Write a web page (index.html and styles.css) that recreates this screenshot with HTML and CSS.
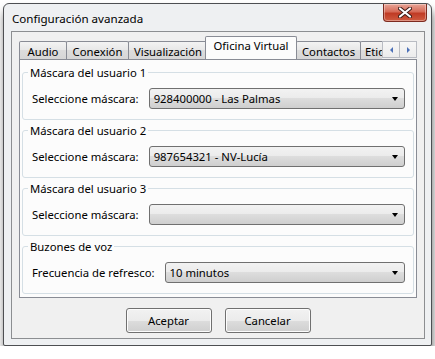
FILE: index.html
```html
<!DOCTYPE html>
<html lang="es">
<head>
<meta charset="UTF-8" />
<title>Configuración avanzada</title>
<link rel="stylesheet" href="styles.css">
</head>
<body>
<div class="window">
  <div class="titlebar">
    <span class="title">Configuración avanzada</span>
    <button class="close" aria-label="Cerrar">
      <svg width="14" height="11" viewBox="0 0 14 11"><path d="M2 1.5 L12 9.5 M12 1.5 L2 9.5" stroke="#3b1a15" stroke-width="4" stroke-linecap="round"/><path d="M2 1.5 L12 9.5 M12 1.5 L2 9.5" stroke="#fff" stroke-width="2.2" stroke-linecap="round"/></svg>
    </button>
  </div>
  <div class="client">
    <div class="tabs">
      <div class="tab-strip">
        <span class="tab w-audio">Audio</span>
        <span class="tab w-conexion">Conexión</span>
        <span class="tab w-visual">Visualización</span>
        <span class="tab active w-oficina">Oficina Virtual</span>
        <span class="tab w-contactos">Contactos</span>
        <span class="tab w-etiq">Etiquetas</span>
      </div>
      <div class="scroller">
        <span class="arrow left"></span>
        <span class="arrow right"></span>
      </div>
    </div>
    <div class="panel">
      <fieldset class="group">
        <legend>Máscara del usuario 1</legend>
        <div class="row">
          <label class="lbl">Seleccione máscara:</label>
          <div class="combo">928400000 - Las Palmas<span class="caret"></span></div>
        </div>
      </fieldset>
      <fieldset class="group">
        <legend>Máscara del usuario 2</legend>
        <div class="row">
          <label class="lbl">Seleccione máscara:</label>
          <div class="combo">987654321 - NV-Lucía<span class="caret"></span></div>
        </div>
      </fieldset>
      <fieldset class="group">
        <legend>Máscara del usuario 3</legend>
        <div class="row">
          <label class="lbl">Seleccione máscara:</label>
          <div class="combo"><span class="caret"></span></div>
        </div>
      </fieldset>
      <fieldset class="group">
        <legend>Buzones de voz</legend>
        <div class="row">
          <label class="lbl">Frecuencia de refresco:</label>
          <div class="combo">10 minutos<span class="caret"></span></div>
        </div>
      </fieldset>
    </div>
    <div class="buttons">
      <button class="btn">Aceptar</button>
      <button class="btn">Cancelar</button>
    </div>
  </div>
</div>
</body>
</html>
```

FILE: styles.css
```css
:root {
  --ui:"Noto Sans","Segoe UI","DejaVu Sans",sans-serif;
  --frame:#eef0f2;
  --face:#f0f0f0;
  --line:#898c95;
  --group:#d5dfe5;
}

body { margin:0; background:#fff; font:11.3px/15px var(--ui); color:#000; }

.window { margin:3px 0 0 3px; width:427px; height:341px; border:1px solid #4d4f52; border-radius:6px 6px 2px 2px; background:var(--frame); box-shadow:1px 7px 9px rgba(0,0,0,.55); display:flex; flex-direction:column; }

.titlebar { height:27px; display:flex; align-items:flex-start; justify-content:space-between; padding:0 4px 0 8px; }
.title { margin-top:7px; font-size:11.6px; }
.close { width:44px; height:18px; margin:0; padding:0; border:1px solid #7c2a1f; border-top:none; border-radius:0 0 4px 4px; background:linear-gradient(#e8a597,#d66b58 45%,#c03b25 55%,#cf5b40); display:flex; align-items:center; justify-content:center; box-shadow:inset 0 0 0 1px rgba(255,255,255,.35); }

.client { flex:1; margin:0 6px 6px 7px; border:1px solid #8c8e91; background:var(--face); padding:8px 7px 0 7px; display:flex; flex-direction:column; }

.tabs { display:flex; align-items:flex-end; height:19px; position:relative; z-index:1; }
.tab-strip { display:flex; align-items:flex-end; overflow:hidden; width:365px; height:23px; }
.tab { flex:none; height:17px; border:1px solid var(--line); border-bottom:none; margin-right:-1px; background:linear-gradient(#f3f3f3,#e7e7e7 50%,#dcdcdc 50%,#d6d6d6); text-align:center; line-height:19px; border-radius:2px 2px 0 0; }
.tab.active { height:22px; background:#fcfcfc; line-height:17px; margin:0 0 -1px -2px; padding-bottom:1px; position:relative; z-index:2; }
.tab.active + .tab { margin-left:-1px; }
.w-audio { width:46px; }
.w-conexion { width:61px; }
.w-visual { width:78px; }
.w-oficina { width:90px; }
.w-contactos { width:63px; }
.w-etiq { width:62px; text-align:left; padding-left:4px; }

.scroller { display:flex; margin:0 0 2px 0; height:16px; }
.arrow { width:16px; height:15px; border:1px solid #b9bcc3; background:linear-gradient(#f7f7f7,#ececec); display:flex; align-items:center; justify-content:center; }
.arrow + .arrow { border-left:none; }
.arrow::before { content:""; width:0; height:0; border-top:3px solid transparent; border-bottom:3px solid transparent; }
.arrow.left::before { border-right:3px solid #4c71b8; }
.arrow.right::before { border-left:3px solid #4c71b8; }

.panel { border:1px solid var(--line); background:#fcfcfc; padding:5px 2px 3px 2px; display:flex; flex-direction:column; gap:3px; }

.group { margin:0; border:1px solid var(--group); border-radius:3px; padding:8px 8px 10px 8px; min-width:0; }
.group legend { padding:0 2px; margin-left:-3px; line-height:15px; }

.row { display:flex; align-items:center; gap:10px; }
.lbl { flex:none; padding-left:1px; }
.combo { flex:1; height:19px; border:1px solid #707070; border-radius:3px; background:linear-gradient(#f2f2f2,#ebebeb 50%,#dddddd 50%,#cfcfcf); padding:0 4px; line-height:19px; display:flex; justify-content:space-between; align-items:center; }
.caret { margin-left:auto; width:0; height:0; border-left:3.5px solid transparent; border-right:3.5px solid transparent; border-top:4px solid #000; margin-right:2px; }

.buttons { display:flex; justify-content:center; gap:13px; padding-top:10px; }
.btn { width:86px; height:25px; border:1px solid #707070; border-radius:3px; background:linear-gradient(#f2f2f2,#ebebeb 50%,#dddddd 50%,#cfcfcf); font:11.3px var(--ui); color:#000; padding:0; box-shadow:inset 0 0 0 1px #fcfcfc; }
```
